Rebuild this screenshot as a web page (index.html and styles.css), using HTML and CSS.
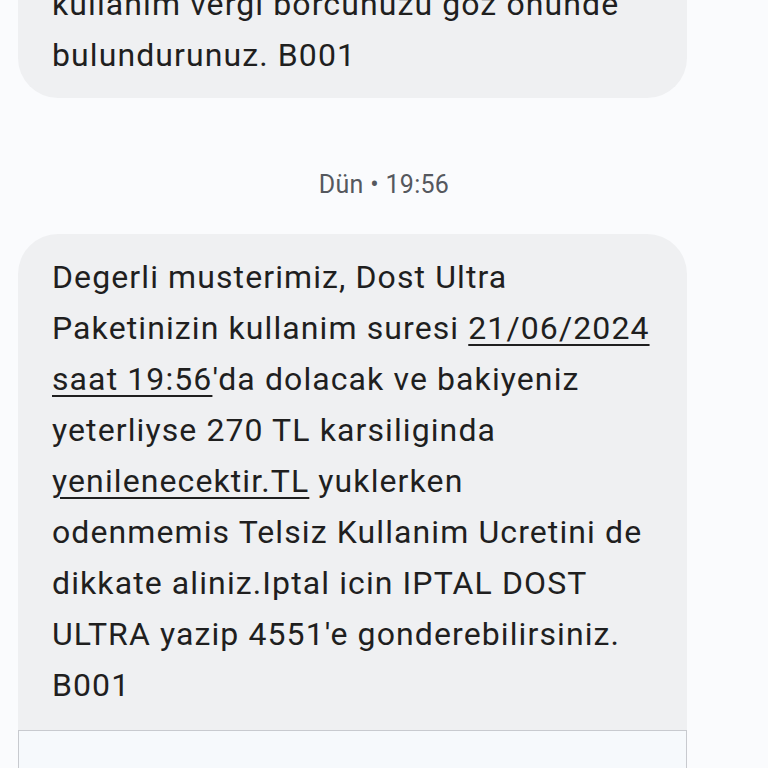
FILE: index.html
```html
<!DOCTYPE html>
<html lang="tr">
<head>
<meta charset="utf-8">
<link rel="stylesheet" href="styles.css">
</head>
<body>
<div class="thread">
  <div class="bubble bubble-top">
    <p class="msg">odenmemis Telsiz<br>kullanim vergi borcunuzu göz önünde<br>bulundurunuz. B001</p>
  </div>
  <div class="stamp">Dün • 19:56</div>
  <div class="group">
    <div class="bubble bubble-main">
      <p class="msg">Degerli musterimiz, Dost Ultra<br>Paketinizin kullanim suresi <span class="link">21/06/2024<br>saat 19:56</span>'da dolacak ve bakiyeniz<br>yeterliyse 270 TL karsiliginda<br><span class="link">yenilenecektir.TL</span> yuklerken<br>odenmemis Telsiz Kullanim Ucretini de<br>dikkate aliniz.Iptal icin IPTAL DOST<br>ULTRA yazip 4551'e gonderebilirsiniz.<br>B001</p>
    </div>
    <div class="preview"></div>
  </div>
</div>
</body>
</html>
```
FILE: styles.css
```css
html, body {
  margin: 0;
  padding: 0;
  background: #fafbfd;
  overflow: hidden;
}
.thread {
  width: 768px;
  height: 768px;
  overflow: hidden;
  font-family: Roboto, "Noto Sans", sans-serif;
  color: #1f1f1f;
}
.bubble {
  margin-left: 18px;
  width: 669px;
  box-sizing: border-box;
  background: #eff0f2;
  padding: 18px 10px 19px 34px;
}
.msg {
  margin: 0;
  font-size: 32px;
  line-height: 51px;
  letter-spacing: 1.1px;
  white-space: nowrap;
}
.bubble-top {
  margin-top: -100px;
  padding-top: 28px;
  padding-bottom: 17px;
  border-radius: 40px;
}
.stamp {
  text-align: center;
  font-size: 25px;
  line-height: 30px;
  letter-spacing: 0.3px;
  color: #55585e;
  margin-top: 72px;
  margin-bottom: 34px;
}
.bubble-main {
  border-radius: 40px 40px 0 0;
}
.link {
  text-decoration: underline;
  text-decoration-thickness: 2px;
  text-underline-offset: 5px;
}
.preview {
  margin-left: 18px;
  width: 669px;
  height: 100px;
  box-sizing: border-box;
  background: #f6f9fc;
  border: 1.5px solid #c8cacf;
}
```
